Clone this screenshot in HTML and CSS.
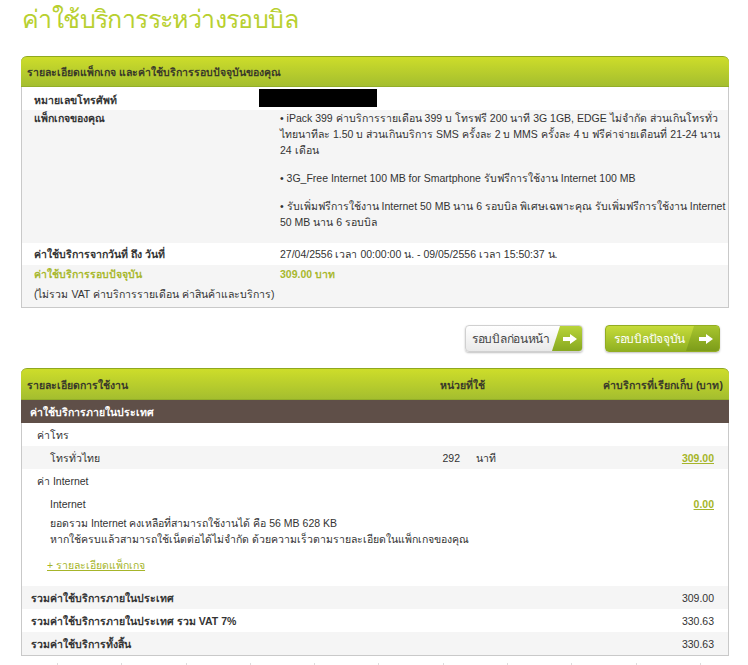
FILE: index.html
```html
<!DOCTYPE html>
<html lang="th">
<head>
<meta charset="utf-8">
<link rel="stylesheet" href="styles.css">
</head>
<body>
<div class="page">
  <h1 class="title">ค่าใช้บริการระหว่างรอบบิล</h1>

  <section class="panel">
    <div class="panel-head"><span>รายละเอียดแพ็กเกจ และค่าใช้บริการรอบปัจจุบันของคุณ</span></div>
    <div class="info">
      <div class="irow white phone"><div class="lbl">หมายเลขโทรศัพท์</div><div class="val"><span class="mask"></span></div></div>
      <div class="irow gray pkg">
        <div class="lbl">แพ็กเกจของคุณ</div>
        <div class="val">
          <p>• iPack 399 ค่าบริการรายเดือน 399 บ โทรฟรี 200 นาที 3G 1GB, EDGE ไม่จำกัด ส่วนเกินโทรทั่วไทยนาทีละ 1.50 บ ส่วนเกินบริการ SMS ครั้งละ 2 บ MMS ครั้งละ 4 บ ฟรีค่าจ่ายเดือนที่ 21-24 นาน 24 เดือน</p>
          <p>• 3G_Free Internet 100 MB for Smartphone รับฟรีการใช้งาน Internet 100 MB</p>
          <p>• รับเพิ่มฟรีการใช้งาน Internet 50 MB นาน 6 รอบบิล พิเศษเฉพาะคุณ รับเพิ่มฟรีการใช้งาน Internet 50 MB นาน 6 รอบบิล</p>
        </div>
      </div>
      <div class="irow white date"><div class="lbl">ค่าใช้บริการจากวันที่ ถึง วันที่</div><div class="val">27/04/2556 เวลา 00:00:00 น. - 09/05/2556 เวลา 15:50:37 น.</div></div>
      <div class="irow gray cur"><div class="lbl">ค่าใช้บริการรอบปัจจุบัน</div><div class="val">309.00 บาท</div></div>
      <div class="irow gray note"><div class="lbl">(ไม่รวม VAT ค่าบริการรายเดือน ค่าสินค้าและบริการ)</div></div>
    </div>
  </section>

  <div class="buttons">
    <a class="btn btn-light"><span class="btn-text">รอบบิลก่อนหน้า</span><span class="btn-arrow"><svg width="14" height="10" viewBox="0 0 14 10"><path d="M0 3h7V0l7 5-7 5V7H0z" fill="#fff"/></svg></span></a>
    <a class="btn btn-green"><span class="btn-text">รอบบิลปัจจุบัน</span><span class="btn-arrow"><svg width="14" height="10" viewBox="0 0 14 10"><path d="M0 3h7V0l7 5-7 5V7H0z" fill="#fff"/></svg></span></a>
  </div>

  <section class="panel usage">
    <div class="panel-head cols"><span class="c1">รายละเอียดการใช้งาน</span><span class="c2">หน่วยที่ใช้</span><span class="c3">ค่าบริการที่เรียกเก็บ (บาท)</span></div>
    <div class="brown">ค่าใช้บริการภายในประเทศ</div>
    <div class="urow white"><span class="cat">ค่าโทร</span></div>
    <div class="urow gray"><span class="item">โทรทั่วไทย</span><span class="qty">292</span><span class="unit">นาที</span><a class="amt">309.00</a></div>
    <div class="urow white"><span class="cat">ค่า Internet</span></div>
    <div class="urow white"><span class="item">Internet</span><span class="qty"></span><span class="unit"></span><a class="amt">0.00</a></div>
    <div class="detail">
      <p>ยอดรวม Internet คงเหลือที่สามารถใช้งานได้ คือ 56 MB 628 KB<br>หากใช้ครบแล้วสามารถใช้เน็ตต่อได้ไม่จำกัด ด้วยความเร็วตามรายละเอียดในแพ็กเกจของคุณ</p>
      <a class="more">+ รายละเอียดแพ็กเกจ</a>
    </div>
    <div class="trow gray"><span>รวมค่าใช้บริการภายในประเทศ</span><span class="tv">309.00</span></div>
    <div class="trow white"><span>รวมค่าใช้บริการภายในประเทศ รวม VAT 7%</span><span class="tv">330.63</span></div>
    <div class="trow gray"><span>รวมค่าใช้บริการทั้งสิ้น</span><span class="tv">330.63</span></div>
  </section>
  <div class="ticks"><i></i><i></i><i></i><i></i><i></i><i></i><i></i><i></i><i></i><i></i><i></i></div>
</div>
</body>
</html>
```

FILE: styles.css
```css
* { box-sizing: border-box; }
html, body { margin: 0; padding: 0; background: #fff; }
body { font-family: Tahoma, "Liberation Sans", "DejaVu Sans", sans-serif; font-size: 10.5px; line-height: 16px; color: #333; }
.page { padding: 0 19px 0 21px; width: 748px; }
.title { margin: 0; padding: 3px 0 0 1px; height: 56px; font-size: 25px; font-weight: normal; color: #b8d030; line-height: 32px; letter-spacing: -0.6px; }

.panel { border: 1px solid #c9c9c9; border-top: 0; border-radius: 6px 6px 0 0; width: 708px; }
.panel-head { height: 31px; margin: 0 -1px; border-radius: 6px 6px 0 0; background: linear-gradient(#cddd2a, #a3bd2f); border-top: 1px solid #8fa81f; display: flex; align-items: center; padding: 0 6px; font-weight: bold; color: #3a3a2a; box-shadow: inset 0 -1px 0 #93ae28; white-space: nowrap; }

.irow { display: flex; padding: 0 12px; }
.white { background: #fff; }
.gray { background: #f5f5f5; }
.irow .lbl { width: 246px; font-weight: bold; flex: none; }
.irow .val { flex: 1; }
.phone { height: 23px; align-items: center; padding-top: 2px; }
.mask { display: block; width: 118px; height: 18px; background: #000; margin-left: -21px; margin-top: -3px; }
.pkg { height: 133px; padding-right: 0; }
.pkg .val p { margin: 0 0 12px; line-height: 16px; }
.pkg .val p:last-child { margin-bottom: 0; }
.date { height: 22px; align-items: center; }
.cur { height: 17px; align-items: center; color: #a8b82e; }
.cur .val { font-weight: bold; }
.note { height: 25px; align-items: center; padding-left: 12px; padding-bottom: 1px; }
.note .lbl { font-weight: normal; width: auto; }

.buttons { display: flex; justify-content: flex-end; gap: 22px; padding: 17px 9px 16px 0; }
.btn { display: flex; align-items: stretch; height: 27px; border-radius: 4px; overflow: hidden; font-size: 12px; white-space: nowrap; box-shadow: 0 1px 2px rgba(0,0,0,.25); }
.btn-text { display: flex; align-items: center; padding: 0 0 0 6px; letter-spacing: -0.3px; }
.btn-light { width: 118px; border: 1px solid #d0d0d0; background: linear-gradient(#ffffff, #e9e9e9); color: #444; }
.btn-light .btn-text { width: 86px; }
.btn-green { width: 115px; border: 1px solid #93ad22; background: linear-gradient(#c7dc3a, #8fb022); color: #fff; }
.btn-green .btn-text { width: 80px; padding-left: 8px; }
.btn-arrow { flex: 1; display: flex; align-items: center; justify-content: center; background: linear-gradient(#b9d43a, #87a820); clip-path: polygon(8px 0, 100% 0, 100% 100%, 0 100%); padding-left: 6px; }
.btn-green .btn-arrow { background: linear-gradient(#a8c52e, #7c9c1a); }

.panel-head.cols { height: 32px; }
.panel-head.cols .c1 { flex: 1; }
.panel-head.cols .c2 { width: 100px; text-align: right; }
.panel-head.cols .c3 { width: 238px; text-align: right; }
.brown { background: #5f4f48; color: #fff; font-weight: bold; height: 23px; display: flex; align-items: center; padding-left: 9px; margin: 0 -1px; }
.urow { display: flex; align-items: center; height: 23px; }
.cat { padding-left: 15px; }
.item { padding-left: 28px; width: 400px; }
.qty { width: 38px; text-align: right; }
.unit { width: 160px; padding-left: 16px; }
.amt { flex: 1; text-align: right; padding-right: 14px; color: #a6b52a; font-weight: bold; text-decoration: underline; }
.detail { padding: 0 0 13px 28px; }
.detail p { margin: 0; line-height: 16px; }
.more { display: block; width: max-content; margin: 10px 0 0 -3px; line-height: 16px; color: #a6b52a; text-decoration: underline; }
.trow { display: flex; justify-content: space-between; height: 23px; align-items: center; padding: 0 14px 0 9px; font-weight: bold; }
.trow .tv { font-weight: normal; }
.ticks { display: flex; justify-content: space-between; margin-left: 36px; padding-top: 7px; width: 644px; }
.ticks i { display: block; width: 1px; height: 3px; background: #ddd; }
```
